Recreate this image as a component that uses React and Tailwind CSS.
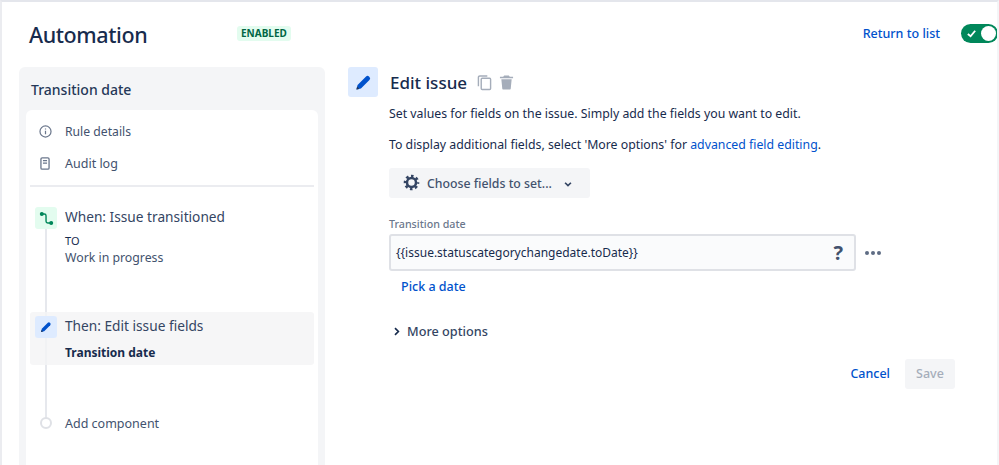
import React from 'react';

const Pencil = ({ className }) => (
  <svg viewBox="0 0 24 24" className={className}>
    <path fill="#0052cc" d="M2 22l1.6-6.4L15.6 3.6a3 3 0 0 1 4.2 0l.6.6a3 3 0 0 1 0 4.2L8.4 20.4z" />
    <path fill="#253858" d="M2 22l1-4.2 3.2 3.2z" />
  </svg>
);

const Gear = ({ className }) => (
  <svg viewBox="0 0 24 24" className={className} fill="none" stroke="#344563">
    <circle cx="12" cy="12" r="6.4" strokeWidth="3.6" />
    <circle cx="12" cy="12" r="9.2" strokeWidth="3.6" strokeDasharray="3.6 3.62" strokeDashoffset="1.8" />
  </svg>
);

const App = () => {
  return (
    <div className="w-[999px] h-[465px] overflow-hidden bg-white border-t-2 border-t-[#e4e6ec] border-l-2 border-l-[#ebecf0] border-r-2 border-r-[#f4f5f7] font-['Noto_Sans','Open_Sans',sans-serif] text-[#172b4d] flex flex-col">
      <header className="h-[65px] shrink-0 flex items-start pl-[27px] -mr-[1px]">
        <h1 className="w-[208px] mt-[17px] text-[21.5px] tracking-[-0.4px] leading-[32px] font-medium text-[#172b4d]">Automation</h1>
        <span className="mt-[24px] h-[15px] px-[4px] rounded-[3px] bg-[#e3fcef] text-[#006644] text-[10px] leading-[15px] font-bold">ENABLED</span>
        <div className="ml-auto flex items-center mt-[22px]">
          <a className="text-[12.5px] leading-[18px] font-medium text-[#0052cc]">Return to list</a>
          <div className="ml-[21px] w-[37px] h-[19px] rounded-full bg-[#00875a] flex items-center justify-between pl-[5px] pr-[2px]">
            <svg viewBox="0 0 12 12" className="w-[11px] h-[11px]" fill="none" stroke="white" strokeWidth="2">
              <path d="M2 6.5 5 9l5-6" />
            </svg>
            <span className="w-[15px] h-[15px] rounded-full bg-white" />
          </div>
        </div>
      </header>

      <div className="flex flex-1 min-h-0">
        <aside className="ml-[17px] w-[306px] shrink-0 bg-[#f4f5f7] rounded-t-[6px] px-[7px] flex flex-col">
          <h2 className="h-[43px] pl-[5px] pt-[13px] text-[14px] leading-[20px] font-medium text-[#253858]">Transition date</h2>
          <div className="flex-1 bg-white rounded-t-[6px] px-[4px] pt-[5px]">
            <div className="flex items-center h-[32px] pl-[9px] text-[12.2px] text-[#42526e]">
              <svg viewBox="0 0 16 16" className="w-[13px] h-[13px] mr-[13px]" fill="none" stroke="#6b778c" strokeWidth="1.5">
                <circle cx="8" cy="8" r="6.8" />
                <path d="M8 7v4.5M8 4.2v1.4" />
              </svg>
              <span className="mt-[2px]">Rule details</span>
            </div>
            <div className="flex items-center h-[32px] pl-[10px] text-[12.5px] text-[#42526e]">
              <svg viewBox="0 0 12 16" className="w-[10px] h-[13px] mr-[15px]" fill="none" stroke="#6b778c" strokeWidth="1.6">
                <rect x="1" y="1" width="10" height="14" rx="1.5" />
                <path d="M3.5 4.5h5M3.5 7.5h5" />
              </svg>
              <span className="mt-[2px]">Audit log</span>
            </div>
            <div className="h-[2px] mt-[6px] bg-[#ebecf0]" />

            <div className="relative mt-[20px]">
              <div className="absolute left-[15px] top-0 w-[2px] h-[218px] bg-[#e6e8ed]" />

              <div className="relative flex h-[105px] pl-[5px]">
                <div className="w-[22px] h-[22px] rounded-[3px] bg-[#e3fcef] flex items-center justify-center">
                  <svg viewBox="0 0 16 16" className="w-[15px] h-[15px]" fill="none" stroke="#00875a" strokeWidth="1.5">
                    <circle cx="3" cy="3.2" r="1.4" fill="#00875a" />
                    <circle cx="13" cy="12.8" r="1.4" fill="#00875a" />
                    <path d="M3 3.2h2.6c1.2 0 1.9.7 1.9 1.9v5.8c0 1.2.7 1.9 1.9 1.9H13" />
                  </svg>
                </div>
                <div className="ml-[8px]">
                  <div className="text-[13.7px] leading-[20px] text-[#344563]">When: Issue transitioned</div>
                  <div className="text-[11px] leading-[14px] mt-[7px] text-[#172b4d]">TO</div>
                  <div className="text-[12.3px] leading-[18px] mt-[1px] text-[#42526e]">Work in progress</div>
                </div>
              </div>

              <div className="relative flex h-[53px] pl-[5px] pt-[4px] rounded-[3px] bg-[#f4f4f5]/80">
                <div className="w-[22px] h-[22px] rounded-[3px] bg-[#deebff] flex items-center justify-center">
                  <Pencil className="w-[12px] h-[12px]" />
                </div>
                <div className="ml-[8px]">
                  <div className="text-[13.7px] leading-[20px] text-[#344563]">Then: Edit issue fields</div>
                  <div className="text-[12px] leading-[16px] mt-[9px] font-bold text-[#172b4d]">Transition date</div>
                </div>
              </div>

              <div className="relative flex items-center h-[22px] mt-[47px] pl-[10px]">
                <span className="w-[12px] h-[12px] shrink-0 rounded-full bg-white border-2 border-[#dfe1e6]" />
                <span className="ml-[13px] mt-[2px] text-[12.5px] text-[#42526e]">Add component</span>
              </div>
            </div>
          </div>
        </aside>

        <main className="flex-1 pl-[23px] pr-[42px]">
          <div className="flex items-center h-[30px]">
            <div className="w-[30px] h-[30px] rounded-[3px] bg-[#deebff] flex items-center justify-center">
              <Pencil className="w-[17px] h-[17px]" />
            </div>
            <h2 className="ml-[12px] mt-[1px] text-[17px] leading-[24px] font-medium text-[#172b4d]">Edit issue</h2>
            <svg viewBox="0 0 16 16" className="ml-[10px] w-[15px] h-[17px]" fill="none" stroke="#a5adba" strokeWidth="1.5">
              <rect x="4.5" y="3.5" width="10" height="12" rx="1" />
              <path d="M11 1H3a1.5 1.5 0 0 0-1.5 1.5V12" />
            </svg>
            <svg viewBox="0 0 16 16" className="ml-[7px] w-[15px] h-[16px]" fill="#a5adba">
              <path d="M5.5 1h5l1 1.5H15V4H1V2.5h3.5zM2.5 5h11l-1 10.2a.8.8 0 0 1-.8.8H4.3a.8.8 0 0 1-.8-.8z" />
            </svg>
          </div>

          <p className="mt-[8px] ml-[41px] text-[12.3px] leading-[18px] text-[#172b4d]">Set values for fields on the issue. Simply add the fields you want to edit.</p>
          <p className="mt-[13px] ml-[41px] text-[12.3px] leading-[18px] text-[#172b4d]">
            To display additional fields, select 'More options' for <a className="text-[#0052cc]">advanced field editing</a>.
          </p>

          <button className="mt-[14px] ml-[41px] h-[30px] w-[201px] rounded-[3px] bg-[#f4f5f7] flex items-center pl-[14px] text-[12.3px] font-medium text-[#42526e]">
            <Gear className="w-[17px] h-[17px] mr-[7px] -mt-[1px]" />
            <span className="mt-[2px]">Choose fields to set...</span>
            <svg viewBox="0 0 12 12" className="ml-[11px] mt-[2px] w-[10px] h-[10px]" fill="none" stroke="#344563" strokeWidth="2">
              <path d="M2.5 4.5 6 8l3.5-3.5" />
            </svg>
          </button>

          <label className="block mt-[18px] ml-[41px] text-[10.7px] leading-[16px] font-medium text-[#6b778c]">Transition date</label>
          <div className="flex items-center ml-[41px] mt-[2px]">
            <div className="w-[467px] h-[37px] rounded-[3px] bg-[#fafbfc] border-2 border-[#dfe1e6] flex items-center justify-between pl-[5px] pr-[11px]">
              <span className="text-[12px] text-[#172b4d]">{'{{issue.statuscategorychangedate.toDate}}'}</span>
              <span className="text-[20px] leading-[28px] font-bold text-[#42526e]">?</span>
            </div>
            <div className="ml-[9px] flex gap-[2px]">
              <span className="w-[4px] h-[4px] rounded-full bg-[#5e6c84]" />
              <span className="w-[4px] h-[4px] rounded-full bg-[#5e6c84]" />
              <span className="w-[4px] h-[4px] rounded-full bg-[#5e6c84]" />
            </div>
          </div>
          <a className="block mt-[7px] ml-[53px] text-[12.5px] leading-[18px] font-medium text-[#0052cc]">Pick a date</a>

          <div className="flex items-center mt-[26px] ml-[44px] text-[12.7px] leading-[18px] font-medium text-[#344563]">
            <svg viewBox="0 0 12 12" className="w-[9px] h-[9px] mr-[6px]" fill="none" stroke="#172b4d" strokeWidth="2.2">
              <path d="M4 1.5 8.5 6 4 10.5" />
            </svg>
            More options
          </div>

          <div className="flex items-center justify-end mt-[19px]">
            <a className="mt-[1px] text-[12.5px] font-medium text-[#0052cc]">Cancel</a>
            <button className="ml-[15px] w-[50px] h-[30px] pt-[1px] rounded-[3px] bg-[#f4f5f7] text-[12.5px] font-medium text-[#a5adba]">Save</button>
          </div>
        </main>
      </div>
    </div>
  );
};

export default App;
